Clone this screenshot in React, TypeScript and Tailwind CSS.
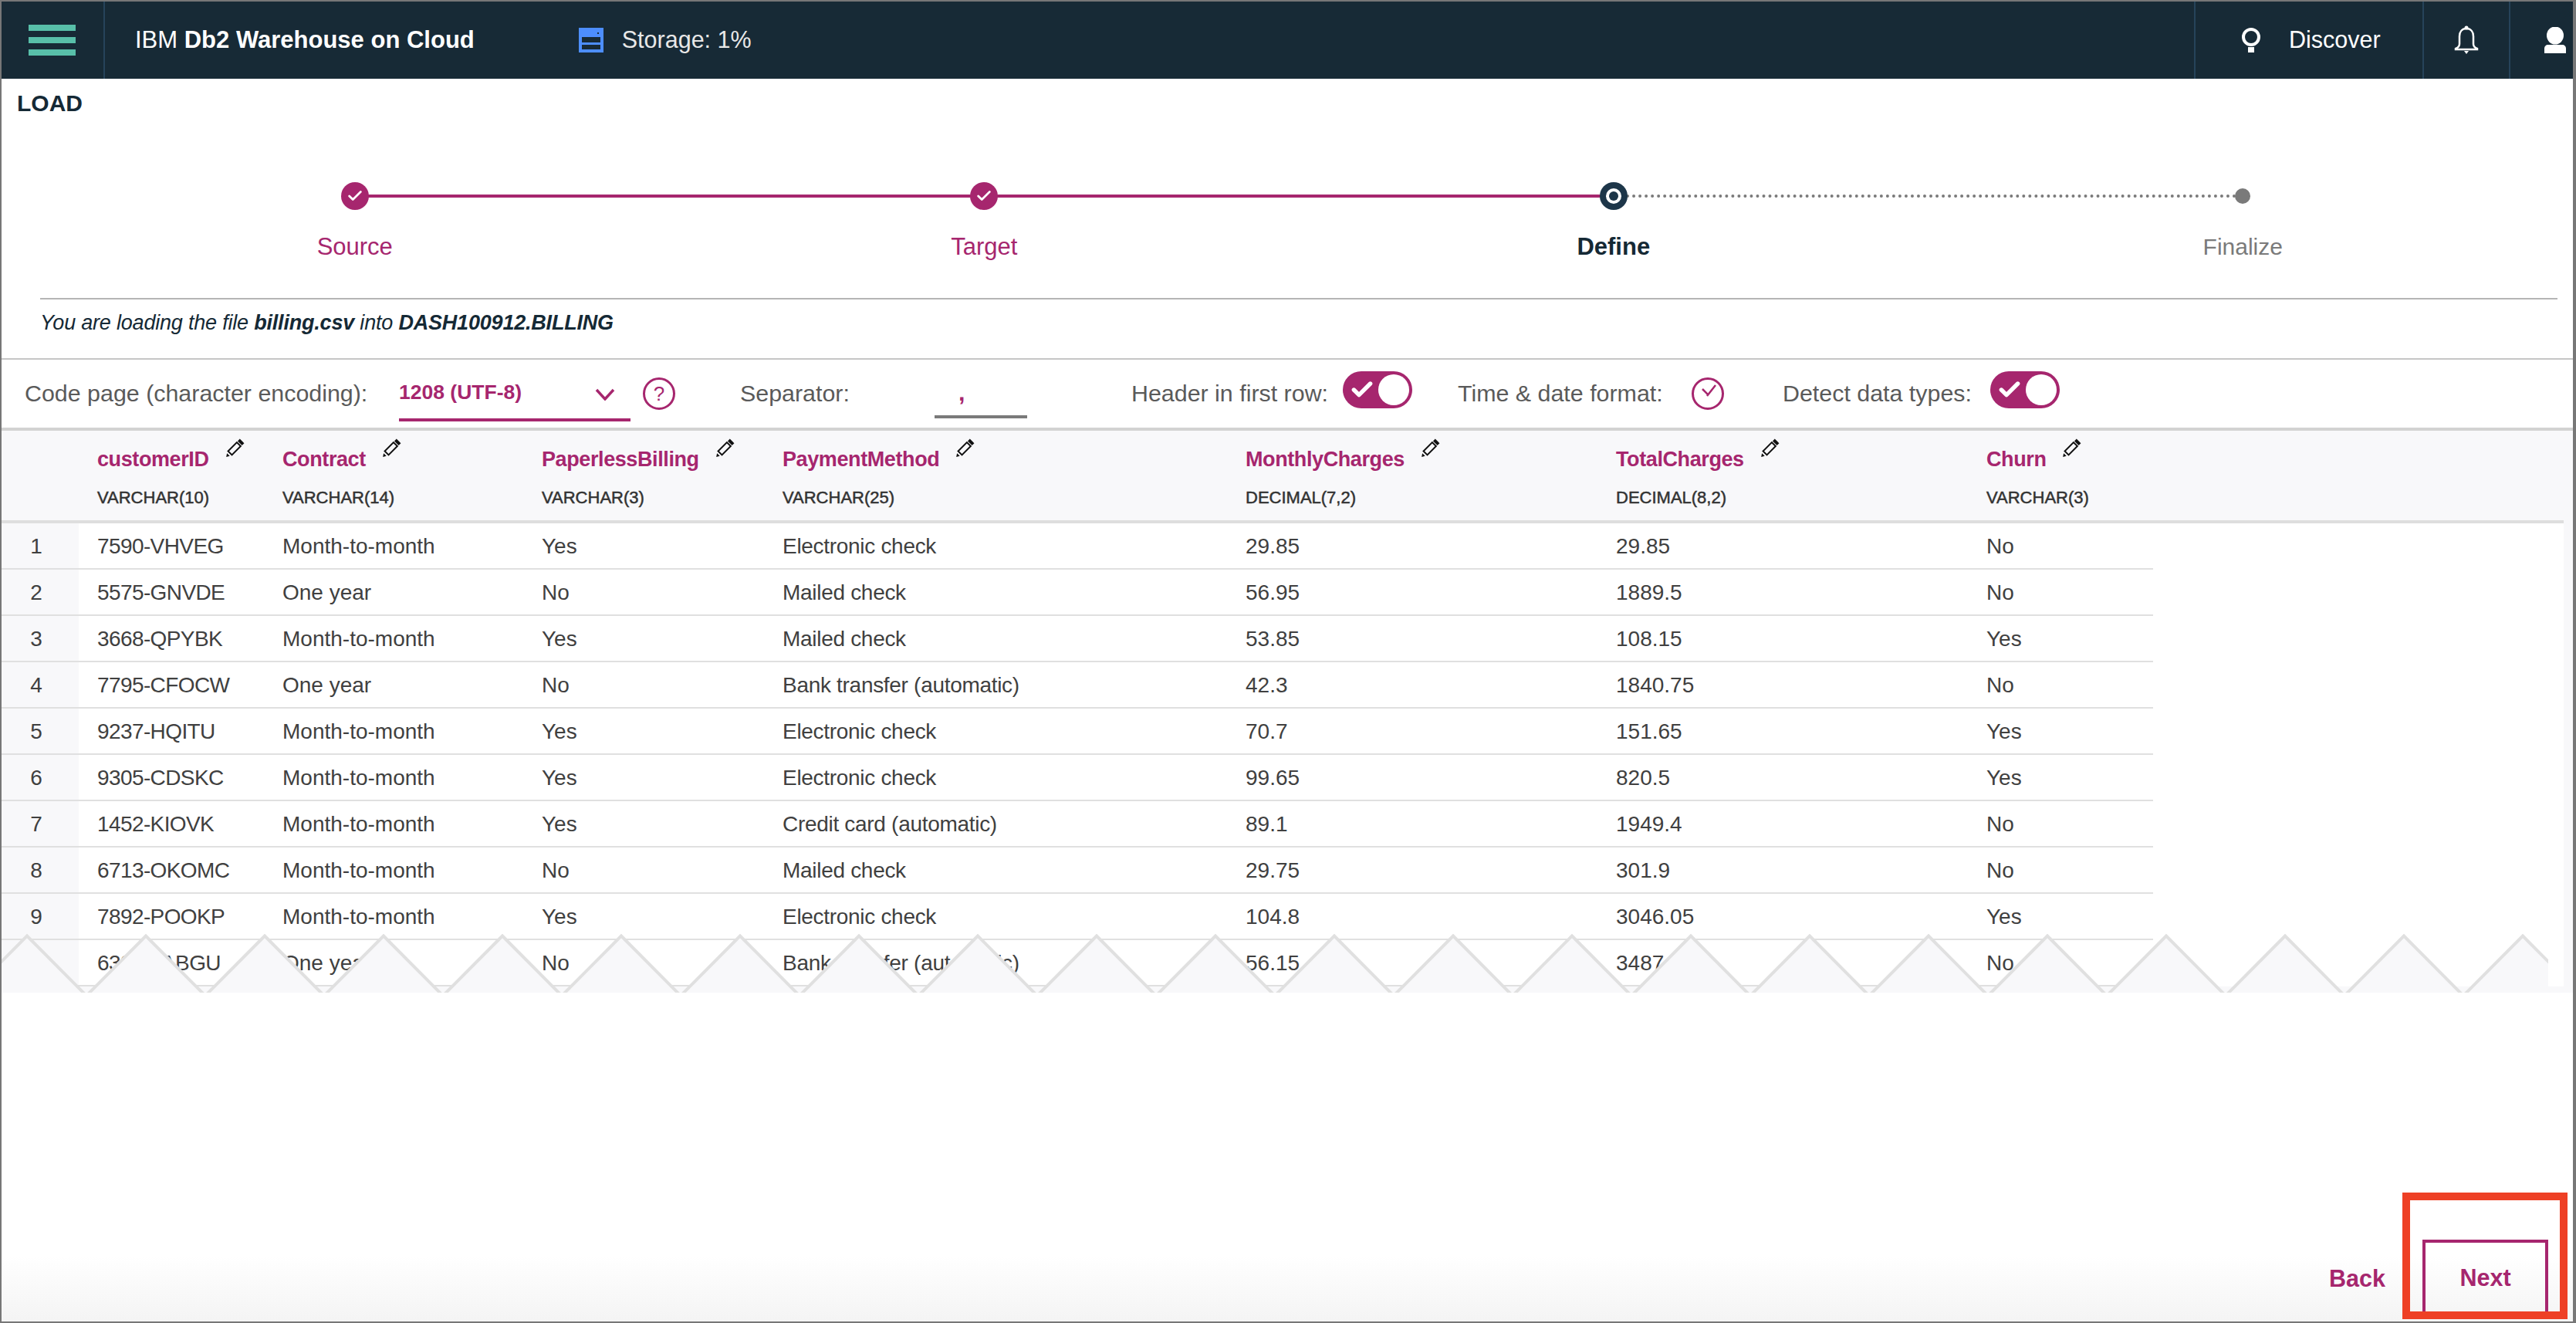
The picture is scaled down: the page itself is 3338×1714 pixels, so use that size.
import React from "react";
import { Check } from "lucide-react";

const rows = [
  ["7590-VHVEG", "Month-to-month", "Yes", "Electronic check", "29.85", "29.85", "No"],
  ["5575-GNVDE", "One year", "No", "Mailed check", "56.95", "1889.5", "No"],
  ["3668-QPYBK", "Month-to-month", "Yes", "Mailed check", "53.85", "108.15", "Yes"],
  ["7795-CFOCW", "One year", "No", "Bank transfer (automatic)", "42.3", "1840.75", "No"],
  ["9237-HQITU", "Month-to-month", "Yes", "Electronic check", "70.7", "151.65", "Yes"],
  ["9305-CDSKC", "Month-to-month", "Yes", "Electronic check", "99.65", "820.5", "Yes"],
  ["1452-KIOVK", "Month-to-month", "Yes", "Credit card (automatic)", "89.1", "1949.4", "No"],
  ["6713-OKOMC", "Month-to-month", "No", "Mailed check", "29.75", "301.9", "No"],
  ["7892-POOKP", "Month-to-month", "Yes", "Electronic check", "104.8", "3046.05", "Yes"],
  ["6388-TABGU", "One year", "No", "Bank transfer (automatic)", "56.15", "3487.95", "No"],
];

const columns = [
  { name: "customerID", type: "VARCHAR(10)" },
  { name: "Contract", type: "VARCHAR(14)" },
  { name: "PaperlessBilling", type: "VARCHAR(3)" },
  { name: "PaymentMethod", type: "VARCHAR(25)" },
  { name: "MonthlyCharges", type: "DECIMAL(7,2)" },
  { name: "TotalCharges", type: "DECIMAL(8,2)" },
  { name: "Churn", type: "VARCHAR(3)" },
];

const steps = [
  { label: "Source", state: "done" },
  { label: "Target", state: "done" },
  { label: "Define", state: "active" },
  { label: "Finalize", state: "todo" },
];

const gridCols = "grid grid-cols-[100px_240px_336px_312px_600px_480px_480px_240px]";

function Pencil() {
  return (
    <svg width="28" height="28" viewBox="0 0 28 28" className="ml-[18px] mt-[10px] shrink-0">
      <g transform="rotate(45 14 14)">
        <rect x="10" y="-1" width="8" height="4" fill="#111" />
        <rect x="10.5" y="5" width="7" height="16" fill="none" stroke="#111" strokeWidth="2" />
        <path d="M11.5 24h5l-2.5 4z" fill="#111" />
      </g>
    </svg>
  );
}

function Toggle() {
  return (
    <div className="-mt-[10px] flex h-12 w-[90px] shrink-0 items-center justify-between rounded-full bg-[#a6266e] pl-[9px] pr-1">
      <Check size={32} strokeWidth={4} className="text-white" />
      <div className="h-10 w-10 rounded-full bg-white" />
    </div>
  );
}

function Zigzag() {
  const teeth = Array.from({ length: 23 }, (_, i) => 33 + i * 154);
  return (
    <svg width="3300" height="76" viewBox="0 0 3300 76" className="absolute bottom-0 left-0">
      {teeth.map((x) => (
        <path
          key={x}
          d={`M${x - 77} 80L${x} 2.5L${x + 77} 80Z`}
          fill="#f8f8fa"
          stroke="#e0e0e0"
          strokeWidth="4"
        />
      ))}
    </svg>
  );
}

function Stepper() {
  return (
    <div className="mx-0 grid grid-cols-4">
      {steps.map((step, i) => (
        <div key={step.label} className="relative flex flex-col items-center">
          {i < 2 && <div className="absolute left-1/2 top-4 h-1 w-full bg-[#a6266e]" />}
          {i === 2 && (
            <div className="absolute left-1/2 top-4 h-1 w-full border-t-4 border-dotted border-[#7a7a7a]" />
          )}
          {step.state === "done" && (
            <div className="relative flex h-9 w-9 items-center justify-center rounded-full bg-[#a6266e]">
              <Check size={22} strokeWidth={3} className="text-white" />
            </div>
          )}
          {step.state === "active" && (
            <div className="relative flex h-9 w-9 items-center justify-center rounded-full bg-[#1d3649]">
              <div className="flex h-5 w-5 items-center justify-center rounded-full bg-white">
                <div className="h-3 w-3 rounded-full bg-[#1d3649]" />
              </div>
            </div>
          )}
          {step.state === "todo" && (
            <div className="relative my-[8px] h-5 w-5 rounded-full bg-[#7a7a7a]" />
          )}
          <div
            className={
              "mt-[30px] leading-9 " +
              (step.state === "done"
                ? "text-[31px] text-[#a6266e]"
                : step.state === "active"
                  ? "text-[31px] font-bold text-[#152935]"
                  : "text-[30px] text-[#7a7a7a]")
            }
          >
            {step.label}
          </div>
        </div>
      ))}
    </div>
  );
}

function Navbar() {
  return (
    <header className="flex h-[100px] shrink-0 bg-[#172a36] text-white">
      <div className="flex w-[134px] flex-col justify-center gap-2 border-r-2 border-[#26435a] pl-[35px]">
        <div className="h-2 w-[61px] bg-[#58bfa9]" />
        <div className="h-2 w-[61px] bg-[#58bfa9]" />
        <div className="h-2 w-[61px] bg-[#58bfa9]" />
      </div>
      <div className="ml-[39px] flex items-center text-[31px]">
        <span>IBM&nbsp;</span>
        <span className="font-bold">Db2 Warehouse on Cloud</span>
      </div>
      <div className="ml-[135px] flex items-center">
        <svg width="32" height="32" viewBox="0 0 32 32">
          <rect width="32" height="32" fill="#4d8eff" />
          <rect x="4" y="12" width="24" height="7" fill="#172a36" />
          <rect x="4" y="22" width="24" height="6" fill="#172a36" />
          <rect x="24" y="6" width="2" height="2" fill="#172a36" />
        </svg>
        <span className="ml-6 text-[30.5px] text-[#e8e8e8]">Storage: 1%</span>
      </div>
      <div className="ml-auto flex w-[296px] items-center border-l-2 border-[#26435a] pl-[60px]">
        <svg width="24" height="32" viewBox="0 0 24 32">
          <circle cx="12" cy="12" r="10" fill="none" stroke="white" strokeWidth="4" />
          <rect x="8" y="25" width="8" height="7" fill="white" />
        </svg>
        <span className="ml-[37px] text-[30.5px]">Discover</span>
      </div>
      <div className="flex w-[112px] items-center justify-center border-l-2 border-[#26435a]">
        <svg width="32" height="38" viewBox="0 0 32 38" fill="none">
          <path
            d="M16 4c-6 0-9 4.500-9 10v10c0 3-2.500 5-5 6v1h28v-1c-2.500-1-5-3-5-6V14c0-5.500-3-10-9-10z"
            stroke="white"
            strokeWidth="2.500"
          />
          <circle cx="16" cy="3" r="2.500" fill="white" />
          <path d="M13 33h6l-3 4z" fill="white" />
        </svg>
      </div>
      <div className="flex w-[83px] items-center border-l-2 border-[#26435a] pl-[44px]">
        <svg width="28" height="34" viewBox="0 0 28 34" className="shrink-0">
          <ellipse cx="14" cy="11" rx="11" ry="11.500" fill="white" />
          <path d="M0 34v-6c0-3 2-5 5-5h18c3 0 5 2 5 5v6z" fill="white" />
        </svg>
      </div>
    </header>
  );
}

function Controls() {
  return (
    <div className="flex h-[88px] shrink-0 items-center pl-[30px] text-[30.4px] text-[#5a5a5a]">
      <div className="w-[485px] shrink-0">Code page (character encoding):</div>
      <div className="mt-[2px] flex h-[70px] w-[300px] shrink-0 items-center justify-between border-b-4 border-[#a6266e] pr-5 text-[26.5px] font-bold text-[#a6266e]">
        <span>1208 (UTF-8)</span>
        <svg width="26" height="16" viewBox="0 0 26 16" fill="none" className="mt-1">
          <path d="M2 2l11 12L24 2" stroke="#a6266e" strokeWidth="3.500" />
        </svg>
      </div>
      <div className="ml-4 flex h-[42px] w-[42px] shrink-0 items-center justify-center rounded-full border-[3px] border-[#a6266e] text-[26px] text-[#a6266e]">
        ?
      </div>
      <div className="ml-[84px] w-[252px] shrink-0">Separator:</div>
      <div className="mt-[2px] flex h-[62px] w-[120px] shrink-0 items-center border-b-4 border-[#7a7a7a] pl-[31px] font-bold text-[#a6266e]">
        ,
      </div>
      <div className="ml-[135px] w-[274px] shrink-0">Header in first row:</div>
      <Toggle />
      <div className="ml-[59px] w-[303px] shrink-0">Time &amp; date format:</div>
      <svg width="42" height="42" viewBox="0 0 42 42" fill="none" className="shrink-0">
        <circle cx="21" cy="21" r="19.500" stroke="#a6266e" strokeWidth="3" />
        <path d="M14 15l8 8M20 24L31 10" stroke="#a6266e" strokeWidth="2.500" />
      </svg>
      <div className="ml-[76px] w-[269px] shrink-0">Detect data types:</div>
      <Toggle />
    </div>
  );
}

function DataTable() {
  return (
    <div className="relative h-[732px] shrink-0 overflow-hidden border-t-4 border-[#d2d2d2] bg-[#f8f8fa]">
      <div className="mr-3 h-[120px] border-b-4 border-[#dedede]">
        <div className={gridCols}>
          <div />
          {columns.map((col) => (
            <div key={col.name} className="pl-6">
              <div className="flex">
                <div className="mt-[19px] text-[27px] font-bold leading-9 tracking-[-0.4px] text-[#a6266e]">
                  {col.name}
                </div>
                <Pencil />
              </div>
              <div className="mt-[17px] text-[22px] leading-[30px] text-[#333] [-webkit-text-stroke:0.5px_#333]">
                {col.type}
              </div>
            </div>
          ))}
        </div>
      </div>
      <div className="mr-3 bg-white">
        {rows.map((row, i) => (
          <div
            key={row[0]}
            className={gridCols + " h-[60px] w-[2788px] border-b-2 border-[#e0e0e0] text-[28px] text-[#404040]"}
          >
            <div className="flex items-center justify-center bg-[#f8f8fa] pr-[10px] pt-[2px]">{i + 1}</div>
            {row.map((cell, j) => (
              <div
                key={j}
                className={
                  "flex items-center pl-6 pt-[2px] " +
                  (j === 0 ? "tracking-[-0.6px]" : j === 3 ? "tracking-[-0.3px]" : "")
                }
              >
                {cell}
              </div>
            ))}
          </div>
        ))}
      </div>
      <Zigzag />
    </div>
  );
}

export default function App() {
  return (
    <div className="relative flex h-screen w-screen flex-col overflow-hidden border-b-2 border-l-2 border-r-4 border-t-2 border-[#777] bg-white font-['Liberation_Sans',Arial,sans-serif]">
      <Navbar />
      <div className="pl-5 pt-[14px] text-[30px] font-bold leading-9 text-[#152935]">LOAD</div>
      <div className="ml-[50px] mr-5 mt-[84px] border-b-2 border-[#b5b5b5] pb-12">
        <Stepper />
      </div>
      <div className="border-b-2 border-[#c6c6c6] pb-7 pl-[50px] pt-3 text-[27px] italic leading-9 tracking-[-0.2px] text-[#152935]">
        You are loading the file <b>billing.csv</b> into <b>DASH100912.BILLING</b>
      </div>
      <Controls />
      <DataTable />
      <footer className="mt-auto flex flex-1 items-end justify-end bg-gradient-to-b from-white from-80% to-[#f4f4f4] pb-[6px] pr-8 text-[30.5px] font-bold text-[#a6266e]">
        <div className="mb-[26px] mr-12">Back</div>
        <div className="flex h-[100px] w-[163px] items-center justify-center border-4 border-[#a6266e]">Next</div>
      </footer>
      <div className="absolute bottom-[3px] right-[7px] h-[164px] w-[214px] border-[10px] border-[#ee4025]" />
    </div>
  );
}
